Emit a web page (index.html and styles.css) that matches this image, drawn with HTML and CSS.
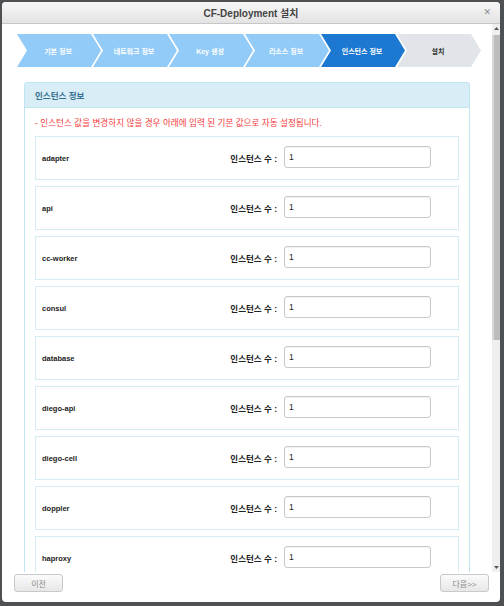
FILE: index.html
```html
<!DOCTYPE html>
<html lang="ko">
<head>
<meta charset="utf-8">
<title>CF-Deployment 설치</title>
<link rel="stylesheet" href="styles.css">
</head>
<body>
<div class="dialog">
  <div class="titlebar">
    <span class="title">CF-Deployment 설치</span>
    <span class="close">&#x2715;</span>
  </div>
  <div class="main">
    <div class="pane">
      <div class="steps">
        <div class="step done">기본 정보</div>
        <div class="step done">네트워크 정보</div>
        <div class="step done">Key 생성</div>
        <div class="step done">리소스 정보</div>
        <div class="step active">인스턴스 정보</div>
        <div class="step todo">설치</div>
      </div>
      <div class="panel">
        <div class="panel-head">인스턴스 정보</div>
        <div class="panel-body">
          <p class="notice">- 인스턴스 값을 변경하지 않을 경우 아래에 입력 된 기본 값으로 자동 설정됩니다.</p>
          <div class="row"><span class="name">adapter</span><span class="qty">인스턴스 수 :</span><input class="field" type="text" value="1"></div>
          <div class="row"><span class="name">api</span><span class="qty">인스턴스 수 :</span><input class="field" type="text" value="1"></div>
          <div class="row"><span class="name">cc-worker</span><span class="qty">인스턴스 수 :</span><input class="field" type="text" value="1"></div>
          <div class="row"><span class="name">consul</span><span class="qty">인스턴스 수 :</span><input class="field" type="text" value="1"></div>
          <div class="row"><span class="name">database</span><span class="qty">인스턴스 수 :</span><input class="field" type="text" value="1"></div>
          <div class="row"><span class="name">diego-api</span><span class="qty">인스턴스 수 :</span><input class="field" type="text" value="1"></div>
          <div class="row"><span class="name">diego-cell</span><span class="qty">인스턴스 수 :</span><input class="field" type="text" value="1"></div>
          <div class="row"><span class="name">doppler</span><span class="qty">인스턴스 수 :</span><input class="field" type="text" value="1"></div>
          <div class="row last"><span class="name">haproxy</span><span class="qty">인스턴스 수 :</span><input class="field" type="text" value="1"></div>
        </div>
      </div>
    </div>
    <div class="scrollbar">
      <div class="sb-btn"><svg width="5" height="3" viewBox="0 0 5 3"><polygon points="0,3 5,3 2.5,0" fill="#555"/></svg></div>
      <div class="sb-track"><div class="sb-thumb"></div></div>
      <div class="sb-btn"><svg width="5" height="3" viewBox="0 0 5 3"><polygon points="0,0 5,0 2.5,3" fill="#555"/></svg></div>
    </div>
  </div>
  <div class="footer">
    <button class="btn" type="button">이전</button>
    <button class="btn" type="button">다음&gt;&gt;</button>
  </div>
</div>
</body>
</html>
```
FILE: styles.css
```css
html, body {
  margin: 0;
  padding: 0;
}
body {
  background: #4e5153;
  font-family: "Liberation Sans", "Noto Sans CJK KR", sans-serif;
  width: 504px;
  height: 606px;
  overflow: hidden;
}
.dialog {
  margin: 2px 0 0 2px;
  width: 498px;
  height: 600px;
  background: #fff;
  border-radius: 4px;
  display: flex;
  flex-direction: column;
  overflow: hidden;
}
.titlebar {
  flex: none;
  height: 21px;
  border-bottom: 1px solid #c6c6c6;
  background: linear-gradient(#f7f7f7, #e3e3e3);
  display: flex;
  align-items: center;
  justify-content: center;
  position: relative;
}
.title {
  font-size: 10px;
  font-weight: bold;
  color: #444;
}
.close {
  position: absolute;
  right: 9px;
  top: 5px;
  font-size: 9px;
  font-weight: bold;
  color: #8c8c8c;
  font-family: "DejaVu Sans", sans-serif;
}
.main {
  flex: 1;
  min-height: 0;
  display: flex;
}
.pane {
  flex: 1;
  min-width: 0;
  overflow: hidden;
}
.scrollbar {
  flex: none;
  width: 8px;
  display: flex;
  flex-direction: column;
  background: #efefef;
}
.sb-btn {
  height: 9px;
  display: flex;
  align-items: center;
  justify-content: center;
}
.sb-btn svg {
  display: block;
}
.sb-track {
  flex: 1;
  padding-top: 2px;
}
.sb-thumb {
  height: 305px;
  background: #bdbdbd;
  border-left: 2px solid #d8d8d8;
}
.steps {
  display: flex;
  padding: 10px 0 0 13px;
}
.step {
  flex: none;
  width: 86px;
  height: 33px;
  margin-left: -10px;
  clip-path: polygon(2px 0, 76px 0, 86px 50%, 76px 100%, 2px 100%, 12px 50%);
  display: flex;
  align-items: center;
  justify-content: center;
  font-size: 7px;
  font-weight: bold;
  color: #fff;
}
.step:first-child {
  margin-left: 0;
}
.step.done {
  background: #92cbf8;
}
.step.active {
  background: #1c78d0;
}
.step.todo {
  background: #e1e4e8;
  color: #333;
}
.panel {
  margin: 15px 22px 0 22px;
  border: 1px solid #c2e4f1;
  border-bottom: none;
  border-radius: 3px 3px 0 0;
}
.panel-head {
  height: 24px;
  background: #d9edf7;
  border-bottom: 1px solid #c2e4f1;
  padding-left: 10px;
  display: flex;
  align-items: center;
  font-size: 8.5px;
  font-weight: bold;
  color: #31708f;
}
.panel-body {
  padding: 9px 10px 0 10px;
}
.notice {
  margin: 0 0 6px 0;
  line-height: 13px;
  font-size: 8.6px;
  color: #f53a3a;
  white-space: nowrap;
}
.row {
  height: 42px;
  border: 1px solid #d5ebf6;
  margin-bottom: 6px;
  display: flex;
  align-items: center;
  padding-left: 6px;
}
.row.last {
  margin-bottom: 0;
}
.name {
  flex: 1;
  font-size: 7.5px;
  font-weight: bold;
  color: #222;
}
.qty {
  font-size: 8.5px;
  font-weight: bold;
  color: #222;
  margin-right: 7px;
}
.field {
  width: 147px;
  height: 22px;
  box-sizing: border-box;
  border: 1px solid #c9c9c9;
  border-radius: 3px;
  padding: 0 4px;
  margin: -2px 27px 0 0;
  font-family: "Liberation Sans", sans-serif;
  font-size: 8.5px;
  color: #222;
  box-shadow: inset 0 1px 1px rgba(0,0,0,0.06);
}
.footer {
  flex: none;
  height: 28px;
  display: flex;
  justify-content: space-between;
  align-items: flex-start;
  padding: 2px 11px 0 12px;
}
.btn {
  width: 49px;
  height: 18px;
  border: 1px solid #c9c9c9;
  border-radius: 3px;
  background: linear-gradient(#fbfbfb, #e7e7e7);
  color: #8a8a8a;
  font-family: "Liberation Sans", "Noto Sans CJK KR", sans-serif;
  font-size: 8px;
  padding: 0;
}
```
